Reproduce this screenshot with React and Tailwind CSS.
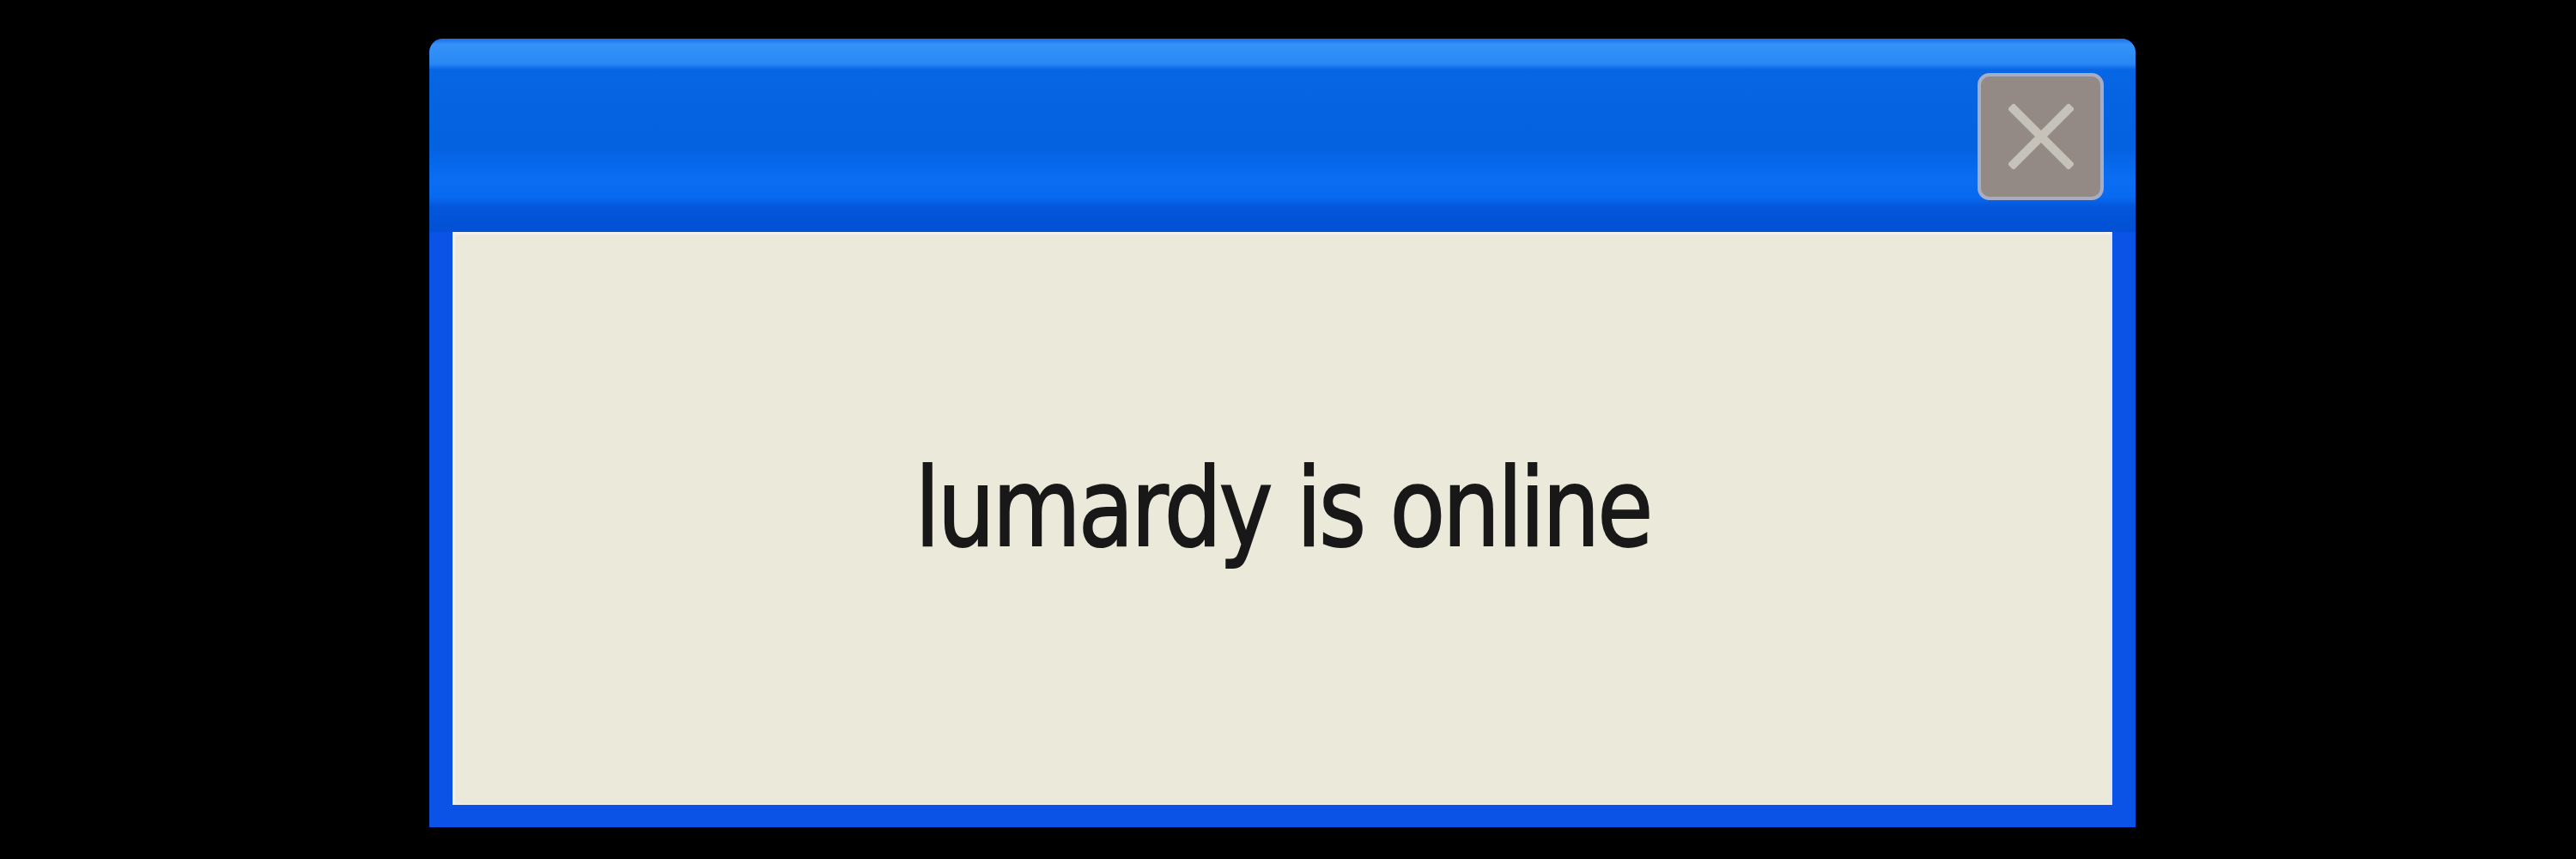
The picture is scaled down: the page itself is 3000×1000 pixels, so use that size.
export default function App() {
    return (
        <div className="w-[3000px] h-[1000px] bg-black pt-[45px] pl-[500px]">
            {/* XP style window */}
            <div className="w-[1987px] h-[918px] flex flex-col rounded-t-[16px] bg-[#0b52e6] overflow-hidden">
                {/* Title bar */}
                <div className="h-[225px] shrink-0 flex items-start justify-end pr-[37px] pt-[40px] bg-[linear-gradient(to_bottom,#1c6ee8_0%,#3592f8_3%,#2a88f5_13%,#0766e4_16%,#0461e0_55%,#0a6df2_72%,#086af0_82%,#0456da_87%,#0250d4_100%)]">
                    {/* Close button (disabled look) */}
                    <div className="w-[147px] h-[148px] rounded-[14px] border-[4px] border-[#a6adc4] bg-[#938a86] flex items-center justify-center">
                        <svg width="76" height="76" viewBox="0 0 76 76">
                            <path d="M6 6 L70 70 M70 6 L6 70" stroke="#c6c2ba" strokeWidth="10" strokeLinecap="square" />
                        </svg>
                    </div>
                </div>
                {/* Body */}
                <div className="flex-1 mx-[27px] mb-[26px] bg-[#ebe9d9] border-t-[3px] border-l-[3px] border-r-[3px] border-b-[2px] border-t-[#f2f3f0] border-l-[#f2f3f0] border-r-[#dfe6f2] border-b-[#e9ecf2] flex items-center justify-center">
                    <span className="font-['DejaVu_Sans',sans-serif] text-[126px] leading-none text-[#181818] [-webkit-text-stroke:2px_#181818] tracking-[-0.03em] inline-block scale-x-[0.84] pb-[24px]">
                        lumardy is online
                    </span>
                </div>
            </div>
        </div>
    );
}
